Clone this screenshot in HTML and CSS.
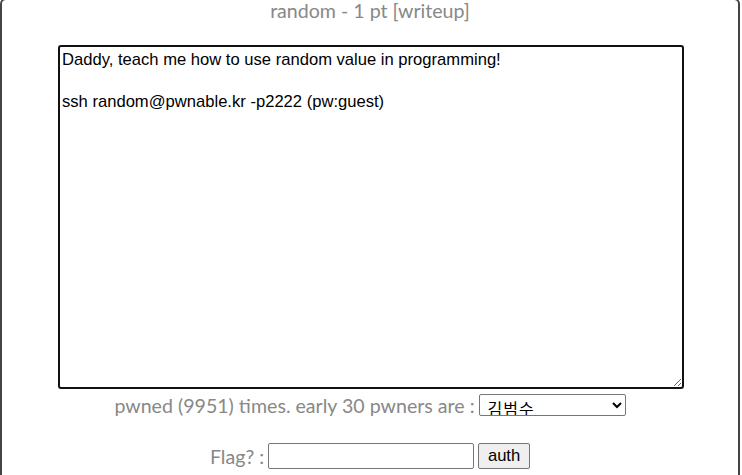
FILE: index.html
```html
<!DOCTYPE html>
<html lang="en">
  <head>
    <meta charset="UTF-8" />
    <meta name="viewport" content="width=device-width, initial-scale=1.0" />
    <title>random - 1 pt</title>
    <link rel="stylesheet" href="styles.css">
  </head>
  <body>
    <div class="modal">
      <p class="title">random - 1 pt <a href="#" class="writeup">[writeup]</a></p>

      <textarea class="desc">Daddy, teach me how to use random value in programming!

ssh random@pwnable.kr -p2222 (pw:guest)</textarea>

      <div class="row pwners">
        <span>pwned (9951) times. early 30 pwners are :</span>
        <select class="pwner-list">
          <option>김범수</option>
        </select>
      </div>

      <div class="row flag">
        <span>Flag? :</span>
        <input type="text" class="flag-input">
        <button class="auth">auth</button>
      </div>
    </div>
  </body>
</html>
```

FILE: styles.css
```css
/* Reset */
body,
p {
  margin: 0;
  padding: 0;
}

body {
  background-color: #fff;
  overflow: hidden;
}

/* Challenge popup */
.modal {
  width: 740px;
  height: 477px;
  box-sizing: border-box;
  margin-top: -2px;
  border: 2px solid #444;
  border-bottom: none;
  border-radius: 6px 6px 0 0;
  background-color: #fff;
  text-align: center;
  font-family: Lato, "Noto Sans", sans-serif;
  color: #888;
}

.title {
  font-size: 19.6px;
  line-height: 22px;
}

.writeup {
  color: #888;
  text-decoration: none;
}

/* Description box */
.desc {
  display: block;
  width: 626px;
  height: 344px;
  box-sizing: border-box;
  margin: 23px 0 0 56px;
  padding: 2px;
  border: 2px solid #111;
  border-radius: 3px;
  font-family: "Liberation Sans", Arial, sans-serif;
  font-size: 16.6px;
  line-height: 21px;
  color: #000;
  resize: both;
  outline: none;
}

/* Form rows */
.row {
  display: flex;
  justify-content: center;
  align-items: center;
  gap: 4px;
  font-size: 19.6px;
  height: 22px;
}

.pwners {
  margin-top: 5px;
}

.flag {
  margin-top: 27px;
  height: 26px;
}

.pwner-list {
  width: 147px;
  height: 22px;
  border: 1px solid #767676;
  border-radius: 2px;
  background-color: #fff;
  padding: 0 4px;
  font-family: "Noto Sans CJK KR", "Noto Sans CJK SC", sans-serif;
  font-size: 16px;
  line-height: 20px;
  letter-spacing: 1px;
  color: #000;
}

.flag-input {
  width: 206px;
  height: 26px;
  box-sizing: border-box;
  border: 1px solid #767676;
  border-radius: 2px;
  margin: 0;
}

.auth {
  width: 52px;
  height: 26px;
  box-sizing: border-box;
  border: 1px solid #767676;
  border-radius: 2px;
  background-color: #efefef;
  font-family: "Liberation Sans", Arial, sans-serif;
  font-size: 16.6px;
  color: #000;
  padding: 0;
}
```
